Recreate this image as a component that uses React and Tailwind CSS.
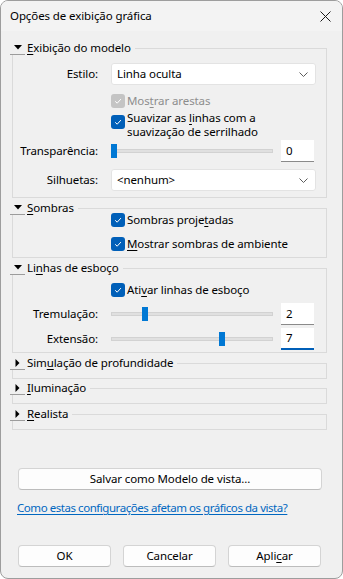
import React from "react";

const font = { fontFamily: '"Segoe UI", "Noto Sans", Arial, sans-serif' };

const U = ({ children }) => <span className="underline underline-offset-2">{children}</span>;

const Check = ({ disabled }) => (
    <span className={`w-[14px] h-[14px] shrink-0 rounded-[3px] flex items-center justify-center ${disabled ? "bg-[#c4c4c4]" : "bg-[#005fb8]"}`}>
        <svg width="10" height="10" viewBox="0 0 10 10">
            <path d="M2.2 5.3 L4.2 7.2 L7.9 3.1" fill="none" stroke="#ffffff" strokeWidth="1" />
        </svg>
    </span>
);

const Toggle = ({ open }) => (
    <span className="w-[15px] h-[14px] flex items-center justify-center border-b border-[#9c9c9c]">
        {open ? (
            <svg width="8" height="5" viewBox="0 0 8 5"><path d="M0 0 H8 L4 4.5 Z" fill="#000" /></svg>
        ) : (
            <svg width="5" height="8" viewBox="0 0 5 8"><path d="M0.5 0 V8 L4.5 4 Z" fill="#000" /></svg>
        )}
    </span>
);

const Group = ({ title, open, className = "", children }) => (
    <fieldset className={`w-[315px] border border-[#dadada] ${className}`}>
        <legend className="ml-[-3px] pr-[4px] flex items-center gap-[2px] h-[14px] leading-[14px]">
            <Toggle open={open} />
            <span>{title}</span>
        </legend>
        {children}
    </fieldset>
);

const Select = ({ value, className = "" }) => (
    <div className={`h-[22px] w-[205px] bg-white border border-[#e3e3e3] rounded-[3px] flex items-center justify-between pl-[5px] pr-[7px] ${className}`}>
        <span>{value}</span>
        <svg width="9" height="5" viewBox="0 0 9 5"><path d="M0.5 0.5 L4.5 4.5 L8.5 0.5" fill="none" stroke="#5c5c5c" strokeWidth="1" /></svg>
    </div>
);

const Slider = ({ left }) => (
    <div className="relative flex-1 h-[14px] flex items-center">
        <div className="w-full h-[4px] bg-[#e0e0e0] border border-[#d2d2d2]" />
        <div className="absolute top-0 w-[6px] h-[14px] bg-[#0078d4]" style={{ left }} />
    </div>
);

const Field = ({ value, focus }) => (
    <div className={`ml-[8px] w-[33px] h-[22px] bg-white flex items-center pl-[5px] ${focus ? "border-b-2 border-[#005fb8]" : "border-b border-[#8a8a8a]"}`}>
        {value}
    </div>
);

const Label = ({ children }) => <span className="w-[85px] text-right shrink-0">{children}</span>;

const Button = ({ children, className = "" }) => (
    <button className={`h-[22px] bg-[#fdfdfd] border border-[#d4d4d4] border-b-[#bcbcbc] rounded-[4px] flex items-center justify-center ${className}`}>
        {children}
    </button>
);

export default function App() {
    return (
        <div style={font} className="w-[343px] h-[579px] text-[11.5px] tracking-[-0.1px] text-black leading-[16px] bg-white">
            <div className="w-full h-full border border-[#9d9d9d] rounded-[8px] bg-[#f0f0f0] flex flex-col overflow-hidden">
                <div className="h-[30px] shrink-0 bg-[#f3f3f3] flex items-center justify-between pl-[9px] pr-[11px]">
                    <span>Opções de exibição gráfica</span>
                    <svg width="11" height="11" viewBox="0 0 11 11">
                        <path d="M0.5 0.5 L10.5 10.5 M10.5 0.5 L0.5 10.5" stroke="#1a1a1a" strokeWidth="1" />
                    </svg>
                </div>

                <div className="flex flex-col pl-[11px] pt-[10px]">
                    <Group title={<><U>E</U>xibição do modelo</>} open className="pb-[6px]">
                        <div className="flex items-center gap-[13px] mt-[8px]">
                            <Label>Estilo:</Label>
                            <Select value="Linha oculta" />
                        </div>
                        <div className="flex items-center gap-[2px] ml-[98px] mt-[8px] text-[#8d8d8d]">
                            <Check disabled />
                            <span>Mos<U>t</U>rar arestas</span>
                        </div>
                        <div className="flex items-start gap-[2px] ml-[98px] mt-[2px] leading-[14px]">
                            <span className="mt-[4px]"><Check /></span>
                            <span className="flex flex-col">
                                <span>Suavizar as <U>l</U>inhas com a</span>
                                <span>suavização de serrilhado</span>
                            </span>
                        </div>
                        <div className="flex items-center gap-[13px] mt-[1px]">
                            <Label>Transparência:</Label>
                            <div className="flex items-center w-[203px]">
                                <Slider left={0} />
                                <Field value="0" />
                            </div>
                        </div>
                        <div className="flex items-center gap-[13px] mt-[7px]">
                            <Label>Silhuetas:</Label>
                            <Select value="<nenhum>" />
                        </div>
                    </Group>

                    <Group title={<><U>S</U>ombras</>} open className="mt-[3px] pb-[5px]">
                        <div className="flex items-center gap-[2px] ml-[98px] -mt-[3px]">
                            <Check />
                            <span>Sombras proje<U>t</U>adas</span>
                        </div>
                        <div className="flex items-center gap-[2px] ml-[98px] mt-[8px]">
                            <Check />
                            <span><U>M</U>ostrar sombras de ambiente</span>
                        </div>
                    </Group>

                    <Group title={<>Li<U>n</U>has de esboço</>} open className="mt-[3px] pb-[2px]">
                        <div className="flex items-center gap-[2px] ml-[98px] mt-[7px]">
                            <Check />
                            <span>Ati<U>v</U>ar linhas de esboço</span>
                        </div>
                        <div className="flex items-center gap-[13px] mt-[5px]">
                            <Label>Tremulação:</Label>
                            <div className="flex items-center w-[203px]">
                                <Slider left={31} />
                                <Field value="2" />
                            </div>
                        </div>
                        <div className="flex items-center gap-[13px] mt-[3px]">
                            <Label>Extensão:</Label>
                            <div className="flex items-center w-[203px]">
                                <Slider left={108} />
                                <Field value="7" focus />
                            </div>
                        </div>
                    </Group>

                    <Group title={<>Sim<U>u</U>lação de profundidade</>} className="mt-[3px] h-[23px]" />
                    <Group title={<><U>I</U>luminação</>} className="mt-[2px] h-[23px]" />
                    <Group title={<><U>R</U>ealista</>} className="mt-[3px] h-[23px]" />
                </div>

                <div className="flex flex-col pl-[16px] pr-[21px]">
                    <Button className="mt-[38px] w-[304px] ml-[1px]">Salvar como Modelo de vista...</Button>
                    <a className="mt-[10px] text-[#0067c0] underline underline-offset-2 w-fit whitespace-nowrap tracking-[-0.45px]">Como estas configurações afetam os gráficos da vista?</a>
                    <div className="mt-[29px] ml-[1px] flex gap-[12px]">
                        <Button className="w-[93px]">OK</Button>
                        <Button className="w-[93px]">Cancelar</Button>
                        <Button className="w-[93px]">Apli<U>c</U>ar</Button>
                    </div>
                </div>
            </div>
        </div>
    );
}
